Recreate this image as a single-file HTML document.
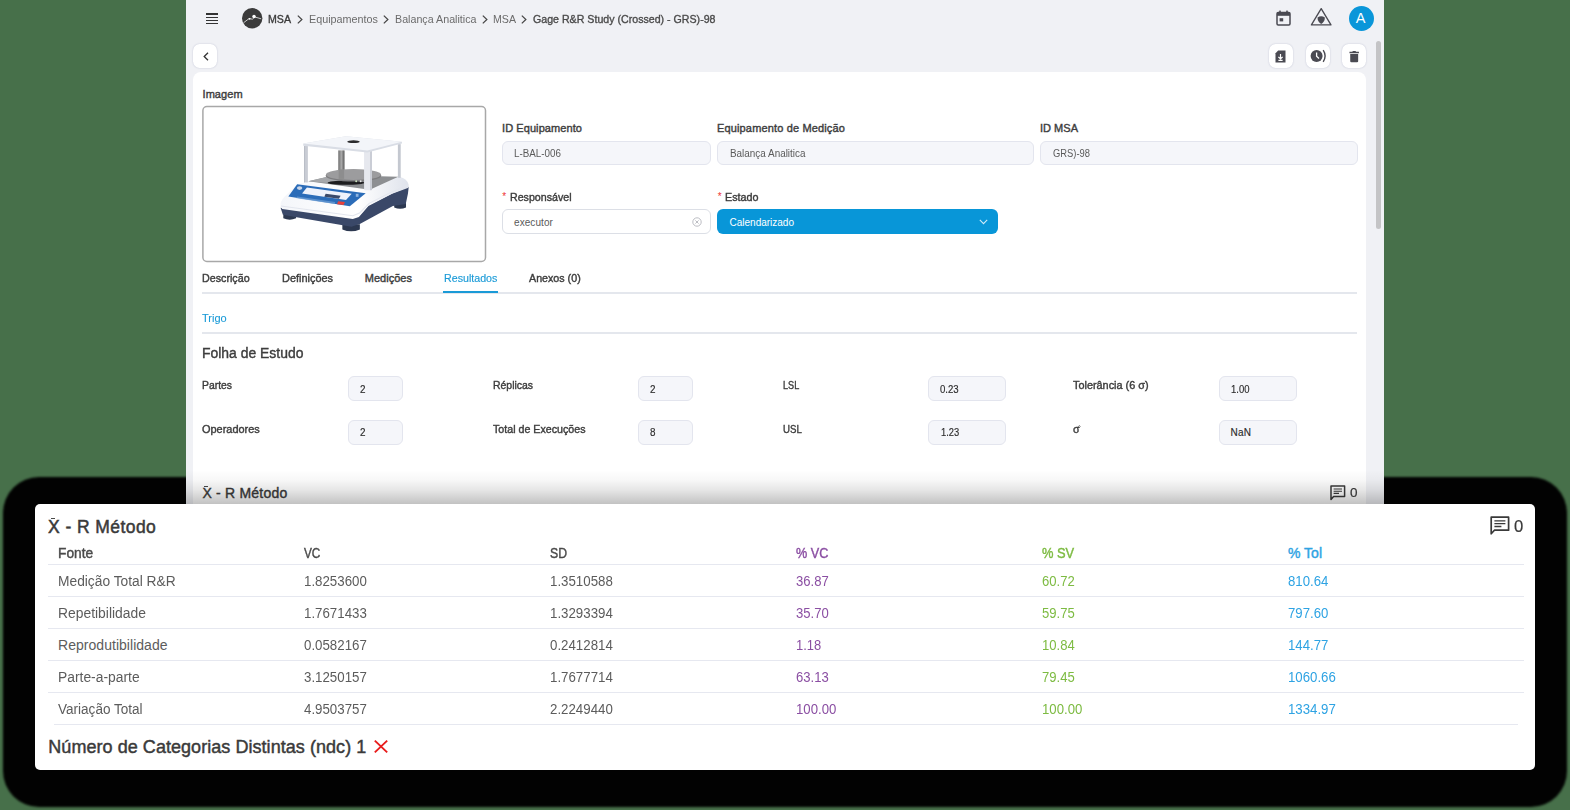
<!DOCTYPE html>
<html><head><meta charset="utf-8"><title>MSA</title>
<style>
html,body{margin:0;padding:0;}
body{width:1570px;height:810px;overflow:hidden;background:#47704a;position:relative;font-family:"Liberation Sans",sans-serif;}
.a{position:absolute;box-sizing:border-box;}
.t{position:absolute;transform-origin:0 0;white-space:nowrap;line-height:1;font-family:"Liberation Sans",sans-serif;}
.inp{position:absolute;box-sizing:border-box;background:#f5f6fa;border:1px solid #e3e5ee;border-radius:6px;}
.btn{position:absolute;box-sizing:border-box;background:#fff;border-radius:6.5px;width:24px;height:24px;box-shadow:0 0 1.6px rgba(60,70,120,0.30);}
.hl{position:absolute;height:1px;background:#e6e8f0;}
svg{position:absolute;overflow:visible;}

</style></head>
<body>
<!-- shadow (alpha dropped => solid black) -->
<div class="a" style="left:3px;top:477px;width:1564px;height:330px;border-radius:36px;background:#020202;filter:blur(1.2px);"></div>
<!-- app window -->
<div class="a" style="left:186px;top:0;width:1198px;height:520px;background:#f0f1f5;"></div>
<!-- main white panel -->
<div class="a" style="left:193px;top:72px;width:1173px;height:450px;background:#fff;border-radius:8px 8px 0 0;"></div>
<!-- scrollbar -->
<div class="a" style="left:1376px;top:41px;width:5px;height:188px;background:#c4c4c6;border-radius:3px;"></div>

<!-- hamburger -->
<div class="a" style="left:206px;top:13.4px;width:12px;height:1.35px;background:#333;"></div>
<div class="a" style="left:206px;top:16.6px;width:12px;height:1.35px;background:#333;"></div>
<div class="a" style="left:206px;top:19.8px;width:12px;height:1.35px;background:#333;"></div>
<div class="a" style="left:206px;top:23px;width:12px;height:1.35px;background:#333;"></div>
<!-- logo -->
<svg style="left:242px;top:8.3px" width="20.4" height="20.4" viewBox="0 0 20 20">
  <circle cx="10" cy="10" r="10" fill="#3b3b3b"/>
  <path d="M1.5 14.5 L7 10.3 L10.2 11 L12.5 8.8 L18.8 10.6" fill="none" stroke="#d8d8d8" stroke-width="0.9"/>
  <circle cx="11.8" cy="8.3" r="1.7" fill="#fff"/>
  <circle cx="7.4" cy="10.6" r="0.9" fill="#fff"/>
</svg>
<!-- chevrons -->
<svg style="left:297px;top:14.5px" width="6" height="9" viewBox="0 0 6 9"><path d="M0.8 0.6 L4.9 4.5 L0.8 8.4" fill="none" stroke="#444" stroke-width="1.2"/></svg>
<svg style="left:383px;top:14.5px" width="6" height="9" viewBox="0 0 6 9"><path d="M0.8 0.6 L4.9 4.5 L0.8 8.4" fill="none" stroke="#444" stroke-width="1.2"/></svg>
<svg style="left:481.5px;top:14.5px" width="6" height="9" viewBox="0 0 6 9"><path d="M0.8 0.6 L4.9 4.5 L0.8 8.4" fill="none" stroke="#444" stroke-width="1.2"/></svg>
<svg style="left:521px;top:14.5px" width="6" height="9" viewBox="0 0 6 9"><path d="M0.8 0.6 L4.9 4.5 L0.8 8.4" fill="none" stroke="#444" stroke-width="1.2"/></svg>

<!-- back button -->
<div class="btn" style="left:193px;top:44px;"></div>
<svg style="left:202.5px;top:51.5px" width="6" height="9" viewBox="0 0 6 9"><path d="M5 0.8 L1.2 4.5 L5 8.2" fill="none" stroke="#333" stroke-width="1.3"/></svg>

<!-- right header icons -->
<svg style="left:1276px;top:10px" width="15" height="16" viewBox="0 0 15 16">
  <rect x="1" y="2.6" width="13" height="12.4" rx="1.2" fill="none" stroke="#4a4a52" stroke-width="1.5"/>
  <rect x="1" y="2.6" width="13" height="3.2" fill="#4a4a52"/>
  <rect x="3.2" y="0.6" width="1.6" height="3" fill="#4a4a52"/>
  <rect x="10.2" y="0.6" width="1.6" height="3" fill="#4a4a52"/>
  <rect x="3.6" y="8.2" width="3.6" height="3.2" fill="#4a4a52"/>
</svg>
<svg style="left:1309.8px;top:6.6px" width="22.4" height="19.4" viewBox="0 0 22 19">
  <path d="M11 1.6 L20.6 17.6 L1.4 17.6 Z" fill="none" stroke="#4a4a52" stroke-width="1.3" stroke-linejoin="round"/>
  <path d="M7.4 10.2 Q11 7.8 14.6 10.2 Q14.6 14.4 11 16.6 Q7.4 14.4 7.4 10.2 Z" fill="#4a4a52"/>
</svg>
<div class="a" style="left:1348.5px;top:5.5px;width:25.8px;height:25.8px;border-radius:50%;background:#0a96d9;"></div>
<span class="t" style="left:1355.7px;top:11.2px;font-size:14.5px;color:#fff;">A</span>

<!-- toolbar buttons -->
<div class="btn" style="left:1268.5px;top:43.8px;"></div>
<div class="btn" style="left:1305.6px;top:43.8px;"></div>
<div class="btn" style="left:1341.7px;top:43.8px;"></div>
<svg style="left:1274.8px;top:49.6px" width="11" height="13" viewBox="0 0 11 13">
  <path d="M3.2 0.5 H10.5 V12.5 H0.5 V3.2 Z" fill="#4a4a52"/>
  <path d="M5.5 4 V8.2 M3.4 6.8 L5.5 9 L7.6 6.8 M3.4 10.4 H7.6" stroke="#fff" stroke-width="1.2" fill="none"/>
</svg>
<svg style="left:1310px;top:49px" width="18" height="14" viewBox="0 0 18 14">
  <circle cx="6.6" cy="7" r="6" fill="#4a4a52"/>
  <path d="M6.6 3.4 V7.2 L9 9.4" stroke="#fff" stroke-width="1.3" fill="none"/>
  <path d="M13.2 1.2 Q17 7 13.2 12.8" stroke="#4a4a52" stroke-width="1.4" fill="none"/>
</svg>
<svg style="left:1348.7px;top:49.5px" width="10.4" height="13" viewBox="0 0 11 13">
  <path d="M0.5 1.6 H3.4 L4.2 0.6 H6.8 L7.6 1.6 H10.5 V3 H0.5 Z" fill="#4a4a52"/>
  <path d="M1.3 3.8 H9.7 V11.4 Q9.7 12.6 8.5 12.6 H2.5 Q1.3 12.6 1.3 11.4 Z" fill="#4a4a52"/>
</svg>

<!-- image box -->
<svg style="left:0;top:0" width="1570" height="300"><rect x="202.9" y="106.6" width="282.6" height="154.8" rx="4" fill="#fff" stroke="#a8a8a8" stroke-width="1.5"/></svg>
<!--SCALE_START-->
<svg style="left:270px;top:130px" width="150" height="110" viewBox="0 0 1105 810">
  <defs>
    <linearGradient id="gb" x1="0" y1="0" x2="1" y2="0"><stop offset="0" stop-color="#f4f6fa"/><stop offset="0.6" stop-color="#ffffff"/><stop offset="1" stop-color="#dfe3ec"/></linearGradient>
    <linearGradient id="gp" x1="0" y1="0" x2="1" y2="0"><stop offset="0" stop-color="#6e6e6e"/><stop offset="0.5" stop-color="#a9a9a9"/><stop offset="1" stop-color="#5a5a5a"/></linearGradient>
  </defs>
  <!-- feet -->
  <path d="M98 620 H192 V650 Q145 672 98 650 Z" fill="#2c3850"/>
  <path d="M915 535 H1002 V570 Q958 590 915 570 Z" fill="#2c3850"/>
  <path d="M533 695 H662 V732 Q598 760 533 732 Z" fill="#2c3850"/>
  <!-- navy base -->
  <path d="M78 572 L610 650 L655 636 L725 556 L900 468 L1022 418 L1016 470 L1000 545 L905 560 L665 690 L600 712 L185 640 L95 625 Z" fill="#3a4868"/>
  <!-- white body -->
  <path d="M78 545 Q82 510 120 478 L200 400 L290 378 L960 346 Q1010 360 1020 400 L1020 425 L900 470 L725 560 L655 640 L610 655 L90 582 Q76 570 78 545 Z" fill="url(#gb)"/>
  <path d="M80 560 L610 632 L660 612 L730 540 L905 452 L1020 405" fill="none" stroke="#e3e6ee" stroke-width="8"/>
  <!-- glass base / dark plate -->
  <path d="M282 378 L480 332 L945 345 L735 440 Z" fill="#8d8f92"/>
  <path d="M282 378 L480 332 L700 338 L520 398 Z" fill="#a5a7aa"/>
  <!-- back pillar (metal) -->
  <rect x="503" y="150" width="46" height="215" fill="url(#gp)"/>
  <!-- pan -->
  <ellipse cx="560" cy="388" rx="135" ry="16" fill="#1d1d1f"/>
  <ellipse cx="615" cy="336" rx="205" ry="44" fill="#7d7d7f"/>
  <ellipse cx="615" cy="328" rx="203" ry="40" fill="#9c9c9e"/>
  <rect x="506" y="290" width="40" height="70" fill="#8a8a8a" opacity="0.8"/>
  <circle cx="635" cy="377" r="7" fill="#cfe8c0"/><circle cx="668" cy="377" r="7" fill="#e8e8e8"/>
  <!-- pillars -->
  <rect x="252" y="118" width="27" height="268" fill="#c9ccd4"/><rect x="252" y="118" width="6" height="268" fill="#b4b8c2"/>
  <rect x="942" y="104" width="21" height="248" fill="#c4c8d0"/>
  <rect x="693" y="155" width="58" height="288" rx="6" fill="#e6e8ee"/>
  <rect x="737" y="155" width="14" height="288" fill="#c9ccd4"/>
  <!-- top plate -->
  <path d="M245 100 L560 46 L972 86 L972 100 L717 165 L245 116 Z" fill="#d9dde5"/>
  <path d="M245 100 L560 46 L972 86 L717 150 Z" fill="#f3f5f9"/>
  <ellipse cx="615" cy="86" rx="46" ry="10" fill="#2a2a2c"/>
  <!-- blue panel -->
  <path d="M200 400 L705 466 L588 562 L135 490 Z" fill="#2b6cb8"/>
  <path d="M272 424 L602 470 L560 516 L236 468 Z" fill="#eef2fb"/>
  <path d="M410 470 L520 484 L508 506 L400 492 Z" fill="#3a4a6a"/>
  <path d="M200 490 L480 530 L476 545 L196 503 Z" fill="#6f9fd6" opacity="0.7"/>
  <path d="M502 524 L552 530 L542 552 L494 546 Z" fill="#e8403a"/>
  <ellipse cx="218" cy="428" rx="20" ry="13" fill="#c9d6ea"/>
  <rect x="632" y="470" width="20" height="22" fill="#8fb4e0"/>
</svg>
<!--SCALE_END-->

<!-- inputs row 1 -->
<div class="inp" style="left:502px;top:140.6px;width:208.5px;height:24.8px;"></div>
<div class="inp" style="left:717px;top:140.6px;width:316.5px;height:24.8px;"></div>
<div class="inp" style="left:1040px;top:140.6px;width:317.5px;height:24.8px;"></div>
<!-- row 2 -->
<span class="t" style="left:502.2px;top:192.3px;font-size:10px;color:#e33;">*</span>
<span class="t" style="left:717.7px;top:192.3px;font-size:10px;color:#e33;">*</span>
<div class="inp" style="left:502px;top:209.2px;width:208.5px;height:25px;background:#fff;border-color:#dcdfe6;"></div>
<svg style="left:691.5px;top:217px" width="10" height="10" viewBox="0 0 10 10"><circle cx="5" cy="5" r="4.2" fill="none" stroke="#b4b6bc" stroke-width="0.9"/><path d="M3.4 3.4 L6.6 6.6 M6.6 3.4 L3.4 6.6" stroke="#b4b6bc" stroke-width="0.9"/></svg>
<div class="a" style="left:717px;top:209.2px;width:280.5px;height:25px;border-radius:6px;background:#0896d8;"></div>
<svg style="left:979px;top:219px" width="9" height="6" viewBox="0 0 9 6"><path d="M0.8 0.8 L4.5 4.6 L8.2 0.8" fill="none" stroke="#cfeaf8" stroke-width="1.1"/></svg>

<!-- tabs line -->
<div class="a" style="left:202px;top:291.5px;width:1155px;height:2px;background:#e4e7ed;"></div>
<div class="a" style="left:443px;top:291.3px;width:54.5px;height:2.2px;background:#1a9ad7;"></div>
<div class="a" style="left:202px;top:332px;width:1155px;height:1.6px;background:#e4e7ed;"></div>

<!-- study inputs -->
<div class="inp" style="left:347.8px;top:376px;width:54.8px;height:24.8px;"></div>
<div class="inp" style="left:638px;top:376px;width:54.8px;height:24.8px;"></div>
<div class="inp" style="left:928.2px;top:376px;width:78px;height:24.8px;"></div>
<div class="inp" style="left:1218.5px;top:376px;width:78px;height:24.8px;"></div>
<div class="inp" style="left:347.8px;top:419.8px;width:54.8px;height:24.8px;"></div>
<div class="inp" style="left:638px;top:419.8px;width:54.8px;height:24.8px;"></div>
<div class="inp" style="left:928.2px;top:419.8px;width:78px;height:24.8px;"></div>
<div class="inp" style="left:1218.5px;top:419.8px;width:78px;height:24.8px;"></div>
<!-- sigma hat -->
<svg style="left:1078.3px;top:424.7px" width="2.8" height="2.2" viewBox="0 0 4 3"><path d="M0.3 2.6 L2 0.5 L3.7 2.6" fill="none" stroke="#3d3d3d" stroke-width="0.8"/></svg>

<!-- window X-bar and comment icon -->
<div class="a" style="left:204.3px;top:486px;width:3.6px;height:1px;background:#4a4a4a;"></div>
<svg style="left:1330px;top:484.5px" width="16" height="16" viewBox="0 0 16 16">
  <path d="M1 1 H14.6 V11.4 H3.6 L1 14.4 Z" fill="none" stroke="#3a3a3a" stroke-width="1.5" stroke-linejoin="round"/>
  <path d="M3.6 4 H12 M3.6 6.2 H12 M3.6 8.4 H9" stroke="#3a3a3a" stroke-width="1.1"/>
</svg>

<!-- shadow gradient over the window bottom -->
<div class="a" style="left:186px;top:470px;width:1198px;height:34px;background:linear-gradient(to bottom, rgba(0,0,0,0) 0%, rgba(0,0,0,0.03) 30%, rgba(0,0,0,0.10) 60%, rgba(0,0,0,0.24) 100%);"></div>

<!-- bottom card -->
<div class="a" style="left:35.1px;top:503.7px;width:1499.8px;height:266.1px;background:#fff;border-radius:5px;"></div>
<div class="a" style="left:51px;top:518px;width:4.4px;height:1px;background:#4a4a4a;"></div>
<svg style="left:1490px;top:515.5px" width="20" height="19" viewBox="0 0 20 19">
  <path d="M1.2 1.2 H18.6 V14.2 H4.4 L1.2 17.8 Z" fill="none" stroke="#3a3a3a" stroke-width="1.7" stroke-linejoin="round"/>
  <path d="M4.4 4.9 H15.4 M4.4 7.7 H15.4 M4.4 10.5 H11.4" stroke="#3a3a3a" stroke-width="1.3"/>
</svg>
<div class="hl" style="left:47.5px;top:564px;width:1476px;"></div>
<div class="hl" style="left:47.5px;top:596px;width:1476px;"></div>
<div class="hl" style="left:47.5px;top:628px;width:1476px;"></div>
<div class="hl" style="left:47.5px;top:660px;width:1476px;"></div>
<div class="hl" style="left:47.5px;top:692px;width:1476px;"></div>
<div class="hl" style="left:53.5px;top:724px;width:1464px;"></div>
<!-- red X -->
<svg style="left:374px;top:739.5px" width="14" height="13" viewBox="0 0 14 13"><path d="M0.8 0.6 L13.2 12.4 M13.2 0.6 L0.8 12.4" stroke="#e81c1c" stroke-width="1.9"/></svg>

<span class="t" style="left:268.0px;top:13.5px;font-size:11.3px;color:#3a3a3a;transform:scaleX(0.9394);-webkit-text-stroke:0.35px #3a3a3a;">MSA</span>
<span class="t" style="left:308.5px;top:13.5px;font-size:11.3px;color:#6b6b6b;transform:scaleX(0.9552);">Equipamentos</span>
<span class="t" style="left:394.5px;top:13.5px;font-size:11.3px;color:#6b6b6b;transform:scaleX(0.9472);">Balança Analitica</span>
<span class="t" style="left:493.0px;top:13.5px;font-size:11.3px;color:#6b6b6b;transform:scaleX(0.9394);">MSA</span>
<span class="t" style="left:532.5px;top:13.5px;font-size:11.3px;color:#4a4a4a;transform:scaleX(0.9407);-webkit-text-stroke:0.35px #4a4a4a;">Gage R&amp;R Study (Crossed) - GRS)-98</span>
<span class="t" style="left:202.5px;top:88.8px;font-size:11px;color:#3d3d3d;letter-spacing:0.075px;-webkit-text-stroke:0.4px #3d3d3d;">Imagem</span>
<span class="t" style="left:502.0px;top:122.7px;font-size:11px;color:#3d3d3d;letter-spacing:0.079px;-webkit-text-stroke:0.4px #3d3d3d;">ID Equipamento</span>
<span class="t" style="left:717.0px;top:122.7px;font-size:11px;color:#3d3d3d;letter-spacing:0.148px;-webkit-text-stroke:0.4px #3d3d3d;">Equipamento de Medição</span>
<span class="t" style="left:1040.0px;top:122.7px;font-size:11px;color:#3d3d3d;letter-spacing:0.016px;-webkit-text-stroke:0.4px #3d3d3d;">ID MSA</span>
<span class="t" style="left:514.0px;top:148.5px;font-size:10px;color:#5a5a5a;transform:scaleX(0.9830);">L-BAL-006</span>
<span class="t" style="left:729.5px;top:148.5px;font-size:10px;color:#5a5a5a;transform:scaleX(0.9912);">Balança Analitica</span>
<span class="t" style="left:1052.5px;top:148.5px;font-size:10px;color:#5a5a5a;transform:scaleX(0.9378);">GRS)-98</span>
<span class="t" style="left:509.5px;top:191.7px;font-size:11px;color:#3d3d3d;transform:scaleX(0.9671);-webkit-text-stroke:0.4px #3d3d3d;">Responsável</span>
<span class="t" style="left:725.0px;top:191.7px;font-size:11px;color:#3d3d3d;transform:scaleX(0.9781);-webkit-text-stroke:0.4px #3d3d3d;">Estado</span>
<span class="t" style="left:514.0px;top:217.5px;font-size:10px;color:#5a5a5a;letter-spacing:0.080px;">executor</span>
<span class="t" style="left:729.5px;top:217.5px;font-size:10px;color:#ffffff;">Calendarizado</span>
<span class="t" style="left:202.4px;top:272.7px;font-size:11px;color:#3d3d3d;transform:scaleX(0.9733);-webkit-text-stroke:0.4px #3d3d3d;">Descrição</span>
<span class="t" style="left:282.0px;top:272.7px;font-size:11px;color:#3d3d3d;transform:scaleX(0.9930);-webkit-text-stroke:0.4px #3d3d3d;">Definições</span>
<span class="t" style="left:364.7px;top:272.7px;font-size:11px;color:#3d3d3d;letter-spacing:0.028px;-webkit-text-stroke:0.4px #3d3d3d;">Medições</span>
<span class="t" style="left:443.6px;top:272.7px;font-size:11px;color:#1a9ad7;transform:scaleX(0.9701);-webkit-text-stroke:0.15px #1a9ad7;">Resultados</span>
<span class="t" style="left:529.0px;top:272.7px;font-size:11px;color:#3d3d3d;transform:scaleX(0.9717);-webkit-text-stroke:0.4px #3d3d3d;">Anexos (0)</span>
<span class="t" style="left:202.4px;top:313.1px;font-size:11px;color:#1a9ad7;transform:scaleX(0.9977);-webkit-text-stroke:0.1px #1a9ad7;">Trigo</span>
<span class="t" style="left:202.4px;top:345.6px;font-size:14px;color:#3d3d3d;transform:scaleX(0.9944);-webkit-text-stroke:0.4px #3d3d3d;">Folha de Estudo</span>
<span class="t" style="left:202.4px;top:379.8px;font-size:11px;color:#3d3d3d;transform:scaleX(0.9435);-webkit-text-stroke:0.4px #3d3d3d;">Partes</span>
<span class="t" style="left:492.8px;top:379.8px;font-size:11px;color:#3d3d3d;transform:scaleX(0.9481);-webkit-text-stroke:0.4px #3d3d3d;">Réplicas</span>
<span class="t" style="left:783.0px;top:379.8px;font-size:11px;color:#3d3d3d;transform:scaleX(0.8275);-webkit-text-stroke:0.4px #3d3d3d;">LSL</span>
<span class="t" style="left:1073.4px;top:379.8px;font-size:11px;color:#3d3d3d;transform:scaleX(0.9884);-webkit-text-stroke:0.4px #3d3d3d;">Tolerância (6 σ)</span>
<span class="t" style="left:202.4px;top:423.8px;font-size:11px;color:#3d3d3d;transform:scaleX(0.9949);-webkit-text-stroke:0.4px #3d3d3d;">Operadores</span>
<span class="t" style="left:492.8px;top:423.8px;font-size:11px;color:#3d3d3d;transform:scaleX(0.9697);-webkit-text-stroke:0.4px #3d3d3d;">Total de Execuções</span>
<span class="t" style="left:783.0px;top:423.8px;font-size:11px;color:#3d3d3d;transform:scaleX(0.8782);-webkit-text-stroke:0.4px #3d3d3d;">USL</span>
<span class="t" style="left:1073.4px;top:423.8px;font-size:11px;color:#3d3d3d;transform:scaleX(0.9710);-webkit-text-stroke:0.4px #3d3d3d;">σ</span>
<span class="t" style="left:359.5px;top:384.5px;font-size:10px;color:#2c2c2c;transform:scaleX(0.9888);-webkit-text-stroke:0.15px #2c2c2c;">2</span>
<span class="t" style="left:649.8px;top:384.5px;font-size:10px;color:#2c2c2c;transform:scaleX(0.9888);-webkit-text-stroke:0.15px #2c2c2c;">2</span>
<span class="t" style="left:940.0px;top:384.5px;font-size:10px;color:#2c2c2c;transform:scaleX(0.9605);-webkit-text-stroke:0.15px #2c2c2c;">0.23</span>
<span class="t" style="left:1230.6px;top:384.5px;font-size:10px;color:#2c2c2c;transform:scaleX(0.9451);-webkit-text-stroke:0.15px #2c2c2c;">1.00</span>
<span class="t" style="left:359.5px;top:428.3px;font-size:10px;color:#2c2c2c;transform:scaleX(0.9888);-webkit-text-stroke:0.15px #2c2c2c;">2</span>
<span class="t" style="left:649.8px;top:428.3px;font-size:10px;color:#2c2c2c;transform:scaleX(0.9888);-webkit-text-stroke:0.15px #2c2c2c;">8</span>
<span class="t" style="left:940.5px;top:428.3px;font-size:10px;color:#2c2c2c;transform:scaleX(0.9348);-webkit-text-stroke:0.15px #2c2c2c;">1.23</span>
<span class="t" style="left:1230.6px;top:428.3px;font-size:10px;color:#2c2c2c;letter-spacing:0.128px;-webkit-text-stroke:0.15px #2c2c2c;">NaN</span>
<span class="t" style="left:202.4px;top:486.1px;font-size:14px;color:#333;letter-spacing:0.218px;-webkit-text-stroke:0.4px #333;">X - R Método</span>
<span class="t" style="left:1349.5px;top:486.1px;font-size:13.5px;color:#333;transform:scaleX(0.9979);-webkit-text-stroke:0.2px #333;">0</span>
<span class="t" style="left:48.0px;top:518.5px;font-size:17.5px;color:#3a3a3a;letter-spacing:0.433px;-webkit-text-stroke:0.5px #3a3a3a;">X - R Método</span>
<span class="t" style="left:1514.0px;top:518.3px;font-size:16.5px;color:#3a3a3a;transform:scaleX(1.0122);-webkit-text-stroke:0.2px #3a3a3a;">0</span>
<span class="t" style="left:58.0px;top:545.9px;font-size:14px;color:#4a4a4a;transform:scaleX(0.9829);-webkit-text-stroke:0.42px #4a4a4a;">Fonte</span>
<span class="t" style="left:304.0px;top:545.9px;font-size:14px;color:#4a4a4a;transform:scaleX(0.8431);-webkit-text-stroke:0.42px #4a4a4a;">VC</span>
<span class="t" style="left:550.0px;top:545.9px;font-size:14px;color:#4a4a4a;transform:scaleX(0.8739);-webkit-text-stroke:0.42px #4a4a4a;">SD</span>
<span class="t" style="left:795.8px;top:545.9px;font-size:14px;color:#8b4fa3;transform:scaleX(0.9023);-webkit-text-stroke:0.42px #8b4fa3;">% VC</span>
<span class="t" style="left:1041.8px;top:545.9px;font-size:14px;color:#7dbb42;transform:scaleX(0.9196);-webkit-text-stroke:0.42px #7dbb42;">% SV</span>
<span class="t" style="left:1288.0px;top:545.9px;font-size:14px;color:#2ea3e3;letter-spacing:0.003px;-webkit-text-stroke:0.42px #2ea3e3;">% Tol</span>
<span class="t" style="left:58.0px;top:574.0px;font-size:14px;color:#5c5c5c;transform:scaleX(0.9843);">Medição Total R&amp;R</span>
<span class="t" style="left:304.0px;top:574.0px;font-size:14px;color:#5c5c5c;transform:scaleX(0.9488);">1.8253600</span>
<span class="t" style="left:550.0px;top:574.0px;font-size:14px;color:#5c5c5c;transform:scaleX(0.9488);">1.3510588</span>
<span class="t" style="left:795.8px;top:574.0px;font-size:14px;color:#8b4fa3;transform:scaleX(0.9345);">36.87</span>
<span class="t" style="left:1041.8px;top:574.0px;font-size:14px;color:#7dbb42;transform:scaleX(0.9345);">60.72</span>
<span class="t" style="left:1288.0px;top:574.0px;font-size:14px;color:#2ea3e3;transform:scaleX(0.9410);">810.64</span>
<span class="t" style="left:58.0px;top:606.0px;font-size:14px;color:#5c5c5c;transform:scaleX(0.9906);">Repetibilidade</span>
<span class="t" style="left:304.0px;top:606.0px;font-size:14px;color:#5c5c5c;transform:scaleX(0.9488);">1.7671433</span>
<span class="t" style="left:550.0px;top:606.0px;font-size:14px;color:#5c5c5c;transform:scaleX(0.9488);">1.3293394</span>
<span class="t" style="left:795.8px;top:606.0px;font-size:14px;color:#8b4fa3;transform:scaleX(0.9345);">35.70</span>
<span class="t" style="left:1041.8px;top:606.0px;font-size:14px;color:#7dbb42;transform:scaleX(0.9345);">59.75</span>
<span class="t" style="left:1288.0px;top:606.0px;font-size:14px;color:#2ea3e3;transform:scaleX(0.9410);">797.60</span>
<span class="t" style="left:58.0px;top:638.0px;font-size:14px;color:#5c5c5c;letter-spacing:0.037px;">Reprodutibilidade</span>
<span class="t" style="left:304.0px;top:638.0px;font-size:14px;color:#5c5c5c;transform:scaleX(0.9488);">0.0582167</span>
<span class="t" style="left:550.0px;top:638.0px;font-size:14px;color:#5c5c5c;transform:scaleX(0.9488);">0.2412814</span>
<span class="t" style="left:795.8px;top:638.0px;font-size:14px;color:#8b4fa3;transform:scaleX(0.9248);">1.18</span>
<span class="t" style="left:1041.8px;top:638.0px;font-size:14px;color:#7dbb42;transform:scaleX(0.9345);">10.84</span>
<span class="t" style="left:1288.0px;top:638.0px;font-size:14px;color:#2ea3e3;transform:scaleX(0.9410);">144.77</span>
<span class="t" style="left:58.0px;top:670.0px;font-size:14px;color:#5c5c5c;transform:scaleX(0.9893);">Parte-a-parte</span>
<span class="t" style="left:304.0px;top:670.0px;font-size:14px;color:#5c5c5c;transform:scaleX(0.9488);">3.1250157</span>
<span class="t" style="left:550.0px;top:670.0px;font-size:14px;color:#5c5c5c;transform:scaleX(0.9488);">1.7677714</span>
<span class="t" style="left:795.8px;top:670.0px;font-size:14px;color:#8b4fa3;transform:scaleX(0.9345);">63.13</span>
<span class="t" style="left:1041.8px;top:670.0px;font-size:14px;color:#7dbb42;transform:scaleX(0.9345);">79.45</span>
<span class="t" style="left:1288.0px;top:670.0px;font-size:14px;color:#2ea3e3;transform:scaleX(0.9455);">1060.66</span>
<span class="t" style="left:58.0px;top:702.0px;font-size:14px;color:#5c5c5c;transform:scaleX(0.9675);">Variação Total</span>
<span class="t" style="left:304.0px;top:702.0px;font-size:14px;color:#5c5c5c;transform:scaleX(0.9488);">4.9503757</span>
<span class="t" style="left:550.0px;top:702.0px;font-size:14px;color:#5c5c5c;transform:scaleX(0.9488);">2.2249440</span>
<span class="t" style="left:795.8px;top:702.0px;font-size:14px;color:#8b4fa3;transform:scaleX(0.9410);">100.00</span>
<span class="t" style="left:1041.8px;top:702.0px;font-size:14px;color:#7dbb42;transform:scaleX(0.9410);">100.00</span>
<span class="t" style="left:1288.0px;top:702.0px;font-size:14px;color:#2ea3e3;transform:scaleX(0.9455);">1334.97</span>
<span class="t" style="left:48.3px;top:737.7px;font-size:18px;color:#3a3a3a;letter-spacing:0.049px;-webkit-text-stroke:0.45px #3a3a3a;">Número de Categorias Distintas (ndc) 1</span>
</body></html>
